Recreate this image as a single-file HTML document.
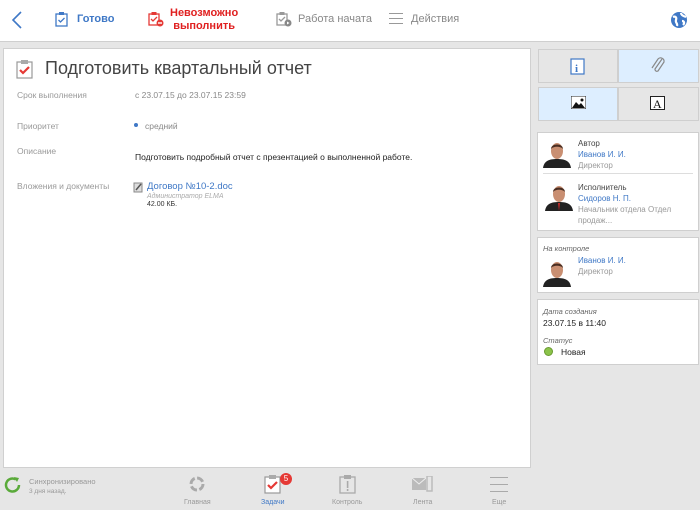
<!DOCTYPE html>
<html><head><meta charset="utf-8"><style>
*{margin:0;padding:0;box-sizing:border-box}
body{width:700px;height:510px;background:#e6e6e6;font-family:"Liberation Sans",sans-serif;position:relative;overflow:hidden;font-size:9px}
.a{position:absolute}
.top{left:0;top:0;width:700px;height:42px;background:#fff;border-bottom:1px solid #cfcfcf}
.main{left:3px;top:48px;width:528px;height:420px;background:#fff;border:1px solid #d0d0d0}
.lbl{color:#999;font-size:8.5px}
.card{background:#fff;border:1px solid #cfcfcf}
.btn{border:1px solid #cfcfcf}
.blue{color:#3f78c6}
.gray{color:#999}
</style></head><body>
<div class="a top">
 <svg class="a" style="left:10px;top:10px" width="14" height="20"><path d="M11 2L3 10l8 8" stroke="#3f78c6" stroke-width="1.6" fill="none"/></svg>
 <svg class="a" style="left:55px;top:11px" width="14" height="16"><rect x="1" y="3" width="11" height="12" fill="none" stroke="#3f78c6" stroke-width="1.3"/><rect x="4" y="1" width="5" height="3" fill="#3f78c6"/><path d="M3.5 9l2 2 4-4" stroke="#3f78c6" stroke-width="1.3" fill="none"/></svg>
 <div class="a blue" style="left:77px;top:13px;font-size:11px;font-weight:bold">Готово</div>
 <svg class="a" style="left:148px;top:11px" width="16" height="16"><rect x="1" y="3" width="10" height="11" fill="none" stroke="#e53935" stroke-width="1.3"/><rect x="3.5" y="1" width="5" height="3" fill="#e53935"/><path d="M3 8l2 2 4-4" stroke="#e53935" stroke-width="1.3" fill="none"/><circle cx="12" cy="12" r="3.5" fill="#e53935"/><rect x="10" y="11.3" width="4" height="1.4" fill="#fff"/></svg>
 <div class="a" style="left:170px;top:7px;color:#e02020;font-size:11px;font-weight:bold;text-align:center;line-height:13px">Невозможно<br>выполнить</div>
 <svg class="a" style="left:276px;top:11px" width="16" height="16"><rect x="1" y="3" width="10" height="11" fill="none" stroke="#999" stroke-width="1.3"/><rect x="3.5" y="1" width="5" height="3" fill="#999"/><path d="M3 8l2 2 4-4" stroke="#999" stroke-width="1.3" fill="none"/><circle cx="12" cy="12" r="3.5" fill="#888"/><path d="M11 10.5v3l2.5-1.5z" fill="#fff"/></svg>
 <div class="a" style="left:298px;top:13px;color:#888;font-size:11px">Работа начата</div>
 <div class="a" style="left:389px;top:13px;width:14px;height:11px;border-top:1.5px solid #999;border-bottom:1.5px solid #999"><div style="margin-top:3.5px;border-top:1.5px solid #999"></div></div>
 <div class="a" style="left:411px;top:13px;color:#888;font-size:11px">Действия</div>
 <svg class="a" style="left:670px;top:11px" width="18" height="18"><circle cx="9" cy="9" r="8" fill="#3f78c6"/><path d="M3 6c2-1 4 0 3 3s2 3 1 6M11 2c0 2 2 3 5 4M12 10c2 0 3 2 1 4" stroke="#fff" stroke-width="2.2" fill="none"/></svg>
</div>
<div class="a main">
 <svg class="a" style="left:12px;top:10px" width="18" height="20"><rect x="1" y="3" width="15" height="16" fill="#fff" stroke="#999" stroke-width="1.2"/><rect x="5" y="1" width="7" height="4" fill="#aaa"/><path d="M4 11l3 3 6-6" stroke="#e53935" stroke-width="2.2" fill="none"/></svg>
 <div class="a" style="left:41px;top:9px;font-size:18px;color:#444">Подготовить квартальный отчет</div>
 <div class="a lbl" style="left:13px;top:41px">Срок выполнения</div>
 <div class="a lbl" style="left:131px;top:41px;color:#888">с 23.07.15 до 23.07.15 23:59</div>
 <div class="a lbl" style="left:13px;top:72px">Приоритет</div>
 <div class="a" style="left:130px;top:74px;width:4px;height:4px;border-radius:50%;background:#3f78c6"></div>
 <div class="a lbl" style="left:141px;top:72px;color:#888">средний</div>
 <div class="a lbl" style="left:13px;top:97px">Описание</div>
 <div class="a" style="left:131px;top:103px;color:#222;font-size:8.5px">Подготовить подробный отчет с презентацией о выполненной работе.</div>
 <div class="a lbl" style="left:13px;top:132px">Вложения и документы</div>
 <svg class="a" style="left:129px;top:133px" width="11" height="11"><rect x="1" y="1" width="8" height="9" fill="#ddd" stroke="#888"/><path d="M3 8l5-6" stroke="#555" stroke-width="1.5"/></svg>
 <div class="a blue" style="left:143px;top:132px;font-size:9.5px">Договор №10-2.doc</div>
 <div class="a" style="left:143px;top:144px;font-size:7px;color:#aaa;font-style:italic">Администратор ELMA</div>
 <div class="a" style="left:143px;top:152px;font-size:7px;color:#333">42.00 КБ.</div>
</div>
<div class="a btn" style="left:538px;top:49px;width:80px;height:34px;background:#e6e6e6"></div>
<div class="a btn" style="left:618px;top:49px;width:81px;height:34px;background:#ddeeff"></div>
<div class="a btn" style="left:538px;top:87px;width:80px;height:34px;background:#ddeeff"></div>
<div class="a btn" style="left:618px;top:87px;width:81px;height:34px;background:#e6e6e6"></div>
<svg class="a" style="left:570px;top:58px" width="15" height="17"><rect x="1" y="1" width="13" height="15" fill="#fff" stroke="#3f78c6" stroke-width="1.2"/><text x="5" y="14" font-size="11" font-weight="bold" fill="#3f78c6" font-family="Liberation Serif">i</text></svg>
<svg class="a" style="left:650px;top:56px" width="16" height="20"><path d="M12 3L5 13a2 2 0 0 0 3 2l6-9a3.5 3.5 0 0 0-6-3L2 12" stroke="#888" stroke-width="1.2" fill="none"/></svg>
<svg class="a" style="left:571px;top:96px" width="15" height="13"><rect width="15" height="13" fill="#fff" stroke="#222"/><path d="M1 12l4-6 3 3 2-2 4 5z" fill="#111"/><circle cx="11" cy="4" r="1.5" fill="#111"/></svg>
<svg class="a" style="left:650px;top:96px" width="15" height="14"><rect x=".5" y=".5" width="14" height="13" fill="#fff" stroke="#222"/><text x="3" y="12" font-size="12" fill="#111" font-family="Liberation Serif">A</text></svg>
<svg width="0" height="0" style="position:absolute"><defs><g id="p"><path d="M0 28c1-7 6-9 14-9s13 2 14 9z" fill="#222"/><ellipse cx="14" cy="11" rx="6" ry="8" fill="#c98f72"/><path d="M8 9c0-6 12-6 12 0c-2-3-10-3-12 0z" fill="#4a2e22"/></g></defs></svg>
<div class="a card" style="left:537px;top:132px;width:162px;height:99px">
 <svg class="a" style="left:5px;top:7px" width="28" height="28"><use href="#p"/></svg>
 <div class="a" style="left:40px;top:5px;color:#444;font-size:8px;line-height:11px">Автор<br><span class="blue">Иванов И. И.</span><br><span class="gray">Директор</span></div>
 <div class="a" style="left:5px;top:40px;width:150px;border-top:1px solid #ddd"></div>
 <svg class="a" style="left:7px;top:50px" width="28" height="28"><use href="#p"/><path d="M13 20h2l-1 8z" fill="#c62828"/></svg>
 <div class="a" style="left:40px;top:49px;color:#444;font-size:8px;line-height:11px">Исполнитель<br><span class="blue">Сидоров Н. П.</span><br><span class="gray">Начальник отдела Отдел<br>продаж...</span></div>
</div>
<div class="a card" style="left:537px;top:237px;width:162px;height:56px">
 <div class="a" style="left:5px;top:6px;color:#666;font-size:7.5px;font-style:italic">На контроле</div>
 <svg class="a" style="left:5px;top:21px" width="28" height="28"><use href="#p"/></svg>
 <div class="a" style="left:40px;top:17px;font-size:8px;line-height:11px"><span class="blue">Иванов И. И.</span><br><span class="gray">Директор</span></div>
</div>
<div class="a card" style="left:537px;top:299px;width:162px;height:66px">
 <div class="a" style="left:5px;top:7px;color:#666;font-size:7.5px;font-style:italic">Дата создания</div>
 <div class="a" style="left:5px;top:18px;color:#222;font-size:8.5px">23.07.15 в 11:40</div>
 <div class="a" style="left:5px;top:36px;color:#666;font-size:7.5px;font-style:italic">Статус</div>
 <div class="a" style="left:6px;top:47px;width:9px;height:9px;border-radius:50%;background:#8bc34a;border:1px solid #6a9a30"></div>
 <div class="a" style="left:23px;top:47px;color:#222;font-size:8.5px">Новая</div>
</div>
<svg class="a" style="left:4px;top:476px" width="18" height="18"><path d="M15 9a6.5 6.5 0 1 1-3-5.5" stroke="#5aaa3a" stroke-width="2.5" fill="none"/><path d="M10 1l5 1-2 4z" fill="#5aaa3a"/></svg>
<div class="a" style="left:29px;top:477px;font-size:7.5px;color:#999;line-height:9px">Синхронизировано<br><span style="font-size:6.5px">3 дня назад.</span></div>
<svg class="a" style="left:188px;top:475px" width="18" height="18"><circle cx="9" cy="9" r="6" stroke="#aaa" stroke-width="3" fill="none" stroke-dasharray="7 2.4"/></svg>
<div class="a" style="left:184px;top:499px;font-size:7px;color:#999">Главная</div>
<svg class="a" style="left:264px;top:474px" width="18" height="20"><rect x="1" y="3" width="15" height="16" fill="#fff" stroke="#999" stroke-width="1.2"/><rect x="5" y="1" width="7" height="4" fill="#aaa"/><path d="M4 11l3 3 6-6" stroke="#e53935" stroke-width="2.2" fill="none"/></svg>
<div class="a" style="left:280px;top:473px;width:12px;height:12px;border-radius:50%;background:#e53935;color:#fff;font-size:8px;text-align:center;line-height:12px">5</div>
<div class="a" style="left:261px;top:499px;font-size:7px;color:#3f78c6">Задачи</div>
<svg class="a" style="left:339px;top:474px" width="18" height="20"><rect x="1" y="3" width="15" height="16" fill="none" stroke="#aaa" stroke-width="1.3"/><rect x="5" y="1" width="7" height="4" fill="#aaa"/><rect x="7.8" y="7" width="1.6" height="7" fill="#aaa"/><rect x="7.8" y="15" width="1.6" height="2" fill="#aaa"/></svg>
<div class="a" style="left:332px;top:499px;font-size:7px;color:#999">Контроль</div>
<svg class="a" style="left:412px;top:476px" width="22" height="16"><rect x="0" y="2" width="14" height="12" fill="#bbb"/><path d="M0 2l7 6 7-6" stroke="#eee" fill="none"/><rect x="15" y="0" width="5" height="15" fill="none" stroke="#bbb" stroke-width="1.5"/></svg>
<div class="a" style="left:413px;top:499px;font-size:7px;color:#999">Лента</div>
<div class="a" style="left:490px;top:477px;width:18px;height:15px;border-top:1.5px solid #aaa;border-bottom:1.5px solid #aaa"><div style="margin-top:5.5px;border-top:1.5px solid #aaa"></div></div>
<div class="a" style="left:492px;top:499px;font-size:7px;color:#999">Еще</div>
</body></html>
